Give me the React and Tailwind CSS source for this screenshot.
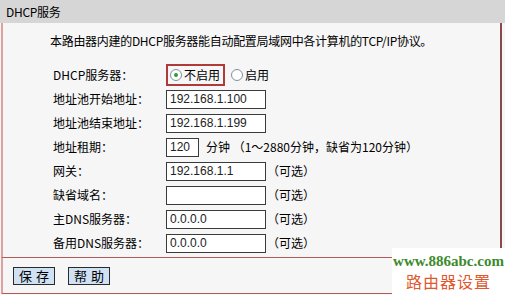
const font = { fontFamily: '"Noto Sans CJK SC", "Liberation Sans", sans-serif' };

function Radio({ checked, label }) {
  return (
    <span className="flex items-center gap-[2px]">
      <span className="w-[12px] h-[12px] rounded-full border border-[#7f8fa0] bg-white flex items-center justify-center">
        {checked && <span className="w-[4px] h-[4px] rounded-full bg-[#2aa02a]" />}
      </span>
      <span>{label}</span>
    </span>
  );
}

function Field({ value = "", w = "w-[100px]" }) {
  return (
    <div
      className={`${w} h-[19px] border border-[#3a3a3a] bg-white px-[3px] text-[12px] leading-[17px] text-[#222] whitespace-pre`}
      style={{ fontFamily: '"Liberation Sans", sans-serif' }}
    >
      {value}
    </div>
  );
}

const rows = [
  { label: "地址池开始地址：", value: "192.168.1.100" },
  { label: "地址池结束地址：", value: "192.168.1.199" },
  { label: "地址租期：", lease: true },
  { label: "网关：", value: "192.168.1.1", opt: true },
  { label: "缺省域名：", value: "", opt: true },
  { label: "主DNS服务器：", value: "0.0.0.0", opt: true },
  { label: "备用DNS服务器：", value: "0.0.0.0", opt: true },
];

export default function App() {
  return (
    <div className="w-[505px] h-[295px] relative overflow-hidden bg-[#f6f6f6] text-[12px] text-black" style={font}>
      <div className="h-[23px] bg-[#d6d6d6] pl-[6px] flex items-center tracking-[-0.3px]">DHCP服务</div>

      <div className="ml-[1px] mr-[3px] h-[235px] border-l-2 border-r-2 border-l-[#e0a0a0] border-r-[#8a4a4a] border-b border-b-[#b05a5a]">
        <p className="pl-[47px] pt-[10px] leading-[16px] tracking-[-0.3px]">
          本路由器内建的DHCP服务器能自动配置局域网中各计算机的TCP/IP协议。
        </p>

        <div className="pl-[50px] pt-[14px]">
          <div className="h-[24px] flex items-center">
            <span className="w-[113px]">DHCP服务器：</span>
            <span className="h-[22px] border-2 border-[#b03a3a] flex items-center pl-[2px] pr-[3px]">
              <Radio checked label="不启用" />
            </span>
            <span className="ml-[6px]">
              <Radio label="启用" />
            </span>
          </div>
          {rows.map((r) => (
            <div key={r.label} className="h-[24px] flex items-center">
              <span className="w-[113px]">{r.label}</span>
              {r.lease ? (
                <>
                  <Field value="120" w="w-[33px]" />
                  <span className="ml-[7px]">分钟 （1～2880分钟，缺省为120分钟）</span>
                </>
              ) : (
                <>
                  <Field value={r.value} />
                  {r.opt && <span className="ml-[1px]">（可选）</span>}
                </>
              )}
            </div>
          ))}
        </div>
      </div>

      <div className="ml-[1px] mr-[3px] h-[36px] border-l-2 border-r-2 border-l-[#e0a0a0] border-r-[#8a4a4a] border-b border-b-[#b05a5a] flex items-center gap-[13px] pl-[10px]">
        <button className="w-[42px] h-[18px] border border-[#2a2a2a] bg-[#cfe1f3] text-[13px] leading-[16px] tracking-[4px] pl-[4px]">保存</button>
        <button className="w-[42px] h-[18px] border border-[#2a2a2a] bg-[#cfe1f3] text-[13px] leading-[16px] tracking-[4px] pl-[4px]">帮助</button>
      </div>

      <div className="absolute left-[392px] top-[248px] w-[113px] h-[47px] bg-white flex flex-col items-center">
        <span
          className="text-[15px] font-bold text-[#3d8a2c] leading-[18px] mt-[4px] whitespace-nowrap"
          style={{ fontFamily: '"Liberation Serif", serif' }}
        >
          www.886abc.com
        </span>
        <span className="text-[16px] text-[#e0582e] leading-[20px] tracking-[1px] mt-[1px]">路由器设置</span>
      </div>
    </div>
  );
}
